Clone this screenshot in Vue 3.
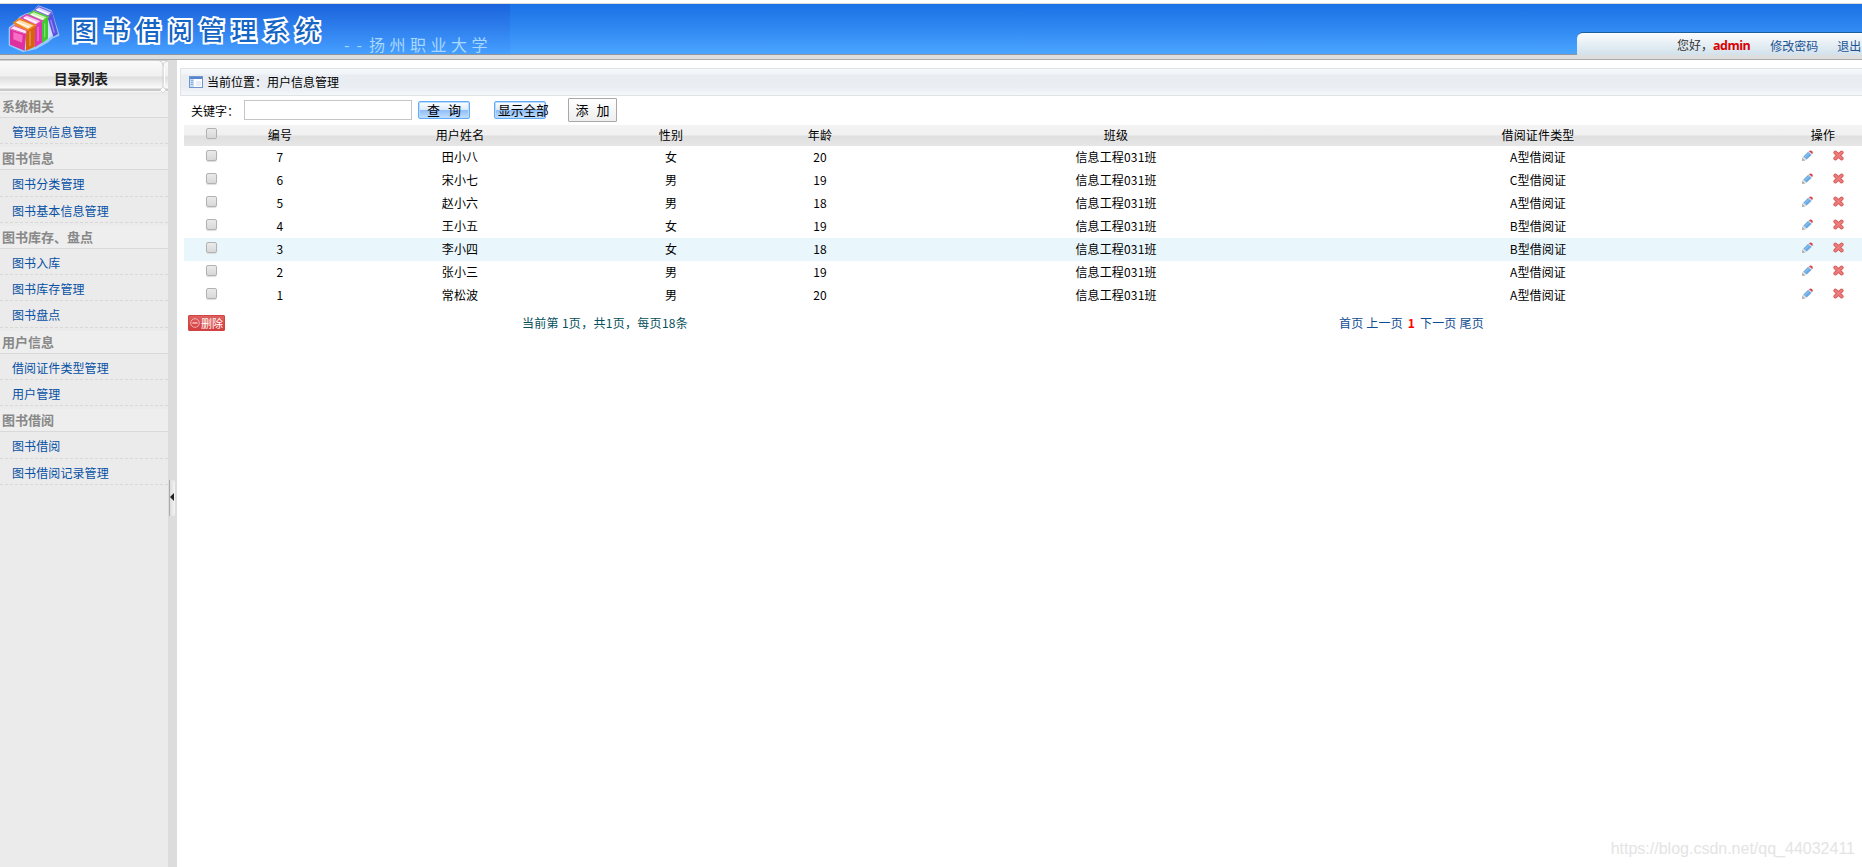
<template>
  <div class="page">
    <header class="header">
      <div class="brand">
        <svg class="logo" viewBox="0 12 180 150">
          <g class="logo-glow">
            <path d="M30 84 46 72 60 54 78 44 98 38 116 20 152 34 174 104 156 112 142 124 106 144 70 152 30 134Z" />
          </g>
          <path d="M140 44 156 36 174 102 160 110Z" fill="#5b50e0" />
          <path d="M104 30 116 20 157 37 144 48Z" fill="#d9d4ff" stroke="#7a68e8" stroke-width="4" />
          <path d="M122 64 144 50 144 116 126 130Z" fill="#3fc72f" />
          <path d="M86 44 100 34 144 51 126 66Z" fill="#c9f5b4" stroke="#58c838" stroke-width="5" />
          <path d="M100 74 126 62 126 128 104 142Z" fill="#e033b4" />
          <path d="M64 54 80 44 126 63 106 76Z" fill="#fbc4ec" stroke="#d946b6" stroke-width="5" />
          <path d="M76 86 106 74 104 140 78 152Z" fill="#d66408" />
          <path d="M42 68 58 57 106 76 84 90Z" fill="#ffe0b0" stroke="#f08015" stroke-width="5" />
          <path d="M44 70 44 84 78 98 80 88Z" fill="#f08a20" />
          <path d="M50 66 88 81M72 53 110 68M92 42 130 57M109 28 146 43" stroke="#fff" stroke-width="4" />
          <path d="M90 94v44M114 80v44M134 70v42M152 60l11 38" stroke="#fff" stroke-width="4" opacity=".35" />
          <path d="M30 88 78 102 74 152 30 134Z" fill="#e02f9f" />
          <path d="M30 86 42 77 80 92 78 102Z" fill="#ffe6f7" stroke="#e55bb4" stroke-width="3" />
          <path d="M40 96 68 105 66 128 40 118Z" fill="#f76cc4" />
        </svg>
        <h1 class="title">图书借阅管理系统</h1>
        <span class="school"><i>--</i>扬州职业大学</span>
      </div>
      <div class="user-bar">
        <span class="hello">您好，<b>admin</b></span>
        <a class="pwd">修改密码</a>
        <a>退出</a>
      </div>
    </header>

    <div class="body">
      <aside class="sidebar">
        <div class="menu-title">
          <span>目录列表</span>
          <svg class="menu-edge" width="10" height="34" viewBox="0 0 10 34" fill="none">
            <path d="M0 .5h1q4 1 4 5v21l-3 3.500 3 3 3-3-3-3.500" stroke="#d0d0d0" />
            <path d="M10 1q-5 1-5 5" stroke="#d0d0d0" />
            <path d="M6.500 8v18" stroke="#fff" />
            <path d="M5 27.500 7.500 30 5 32.500 2.500 30Z" fill="#fff" />
          </svg>
        </div>
        <template v-for="group in menu" :key="group.name">
          <div class="menu-group">{{ group.name }}</div>
          <a v-for="item in group.items" :key="item" class="menu-item">{{ item }}</a>
        </template>
      </aside>

      <div class="splitter">
        <div class="handle"><i></i></div>
      </div>

      <main class="main">
        <div class="location">
          <svg width="14" height="12" viewBox="0 0 14 12">
            <rect x=".5" y=".5" width="13" height="11" fill="#fff" stroke="#6f97cf" />
            <path d="M1 1h12v2H1z" fill="#5585cc" />
            <path d="M1 3h4v8H1z" fill="#c6dcf5" />
            <path d="M2 4.500h2M2 6.500h2M2 8.500h2" stroke="#8aaedb" />
            <path d="M7 5h5v5H7z" fill="#e9eff8" />
          </svg>
          <span>当前位置：用户信息管理</span>
        </div>

        <form class="search" @submit.prevent>
          <label>关键字：</label>
          <input v-model="keyword" type="text" class="keyword" />
          <button class="btn-blue">查&nbsp; 询</button>
          <button class="btn-blue btn-all">显示全部</button>
          <button class="btn-add">添&nbsp; 加</button>
        </form>

        <div class="row head">
          <span><input type="checkbox" v-model="allChecked" class="check" /></span>
          <span v-for="col in columns" :key="col">{{ col }}</span>
        </div>
        <div
          v-for="user in users"
          :key="user.id"
          class="row"
          :class="{ active: user.id === activeId }"
        >
          <span><input type="checkbox" v-model="user.checked" class="check" /></span>
          <span>{{ user.id }}</span>
          <span>{{ user.name }}</span>
          <span>{{ user.sex }}</span>
          <span>{{ user.age }}</span>
          <span>信息工程031班</span>
          <span>{{ user.card }}型借阅证</span>
          <span class="ops">
            <svg width="12" height="12" viewBox="0 0 12 12">
              <path d="M1 11 1.300 7.500 4.300 10.500Z" fill="#aaa" />
              <path d="M1.300 7.500 3 6 6 9 4.300 10.600Z" fill="#ddd" />
              <path d="M2.400 6.500 7.200 1.800 10.500 5 5.700 9.600Z" fill="#6aaae2" />
              <path d="M4 7.200 8.400 3" stroke="#9bcaf0" />
              <path d="M7.200 1.800 8.200 1 11.200 4 10.500 5Z" fill="#d8d8e0" />
              <path d="M8 1.200Q9.500-.2 11 1.100T11.200 4Z" fill="#d8414f" />
            </svg>
            <svg width="11" height="11" viewBox="0 0 11 11">
              <path d="M2.300 2.500 8.700 8.500M8.700 2.500 2.300 8.500" stroke="#d35c5c" stroke-width="3.800" stroke-linecap="round" />
              <path d="M2.300 2.500 8.700 8.500M8.700 2.500 2.300 8.500" stroke="#ee7c7b" stroke-width="2.200" stroke-linecap="round" />
            </svg>
          </span>
        </div>

        <div class="footer">
          <button class="btn-del">
            <svg width="10" height="10" viewBox="0 0 10 10" fill="none" stroke="#f3b0b0">
              <circle cx="5" cy="5" r="4.300" />
              <path d="M2.500 5h5" stroke="#fff" />
            </svg>
            <span>删除</span>
          </button>
          <span class="summary">当前第 1页，共1页，每页18条</span>
          <span class="pager">
            <a>首页</a> <a>上一页</a> <b>1</b> <a>下一页</a> <a>尾页</a>
          </span>
        </div>
      </main>
    </div>
    <div class="watermark">https://blog.csdn.net/qq_44032411</div>
  </div>
</template>

<script setup>
import { ref } from 'vue';

const keyword = ref('');
const allChecked = ref(false);
const activeId = ref(3);

const menu = [
  { name: '系统相关', items: ['管理员信息管理'] },
  { name: '图书信息', items: ['图书分类管理', '图书基本信息管理'] },
  { name: '图书库存、盘点', items: ['图书入库', '图书库存管理', '图书盘点'] },
  { name: '用户信息', items: ['借阅证件类型管理', '用户管理'] },
  { name: '图书借阅', items: ['图书借阅', '图书借阅记录管理'] },
];

const columns = ['编号', '用户姓名', '性别', '年龄', '班级', '借阅证件类型', '操作'];

const users = ref([
  { id: 7, name: '田小八', sex: '女', age: 20, card: 'A', checked: false },
  { id: 6, name: '宋小七', sex: '男', age: 19, card: 'C', checked: false },
  { id: 5, name: '赵小六', sex: '男', age: 18, card: 'A', checked: false },
  { id: 4, name: '王小五', sex: '女', age: 19, card: 'B', checked: false },
  { id: 3, name: '李小四', sex: '女', age: 18, card: 'B', checked: false },
  { id: 2, name: '张小三', sex: '男', age: 19, card: 'A', checked: false },
  { id: 1, name: '常松波', sex: '男', age: 20, card: 'A', checked: false },
]);
</script>

<style>
body {
  margin: 0;
  overflow: hidden;
}
</style>

<style scoped>
.page {
  position: relative;
  display: flex;
  flex-direction: column;
  height: 100vh;
  overflow: hidden;
  background: #fff;
  color: #000;
  font: 12px/18px "Noto Sans CJK SC", sans-serif;
}

.page * {
  box-sizing: border-box;
}

button,
input {
  margin: 0;
  padding: 0;
  font: inherit;
}

/* header */
.header {
  display: flex;
  justify-content: space-between;
  flex: none;
  height: 57px;
  margin-top: 3px;
  border-top: 1px solid #d9d9d9;
  border-bottom: 1px solid #a9a9a9;
  background: linear-gradient(#1a72e6, #2e86f0 45%, #4aa5ff) 0 0 / 100% 50px no-repeat,
    linear-gradient(#8f979e 0 1px, #dedede 1px) 0 50px / 100% 6px no-repeat;
}

.brand {
  display: flex;
  align-items: flex-start;
  width: 510px;
  height: 50px;
  background: linear-gradient(#1a63dc, #2d7dec 45%, #469fff);
}

.logo {
  width: 60px;
  height: 50px;
}

.logo-glow {
  fill: #fff;
  stroke: #b9dcff;
  stroke-width: 8px;
  stroke-linejoin: round;
  opacity: 0.75;
}

.title {
  width: 272px;
  margin: 8px 0 0 12px;
  color: #1565c4;
  font-size: 25px;
  font-weight: 500;
  line-height: 34px;
  letter-spacing: 6.900px;
  white-space: nowrap;
  -webkit-text-stroke: 4px #fff;
  paint-order: stroke fill;
}

.school {
  display: block;
  margin-top: 29px;
  color: #a9d8ff;
  font-size: 16px;
  line-height: 22px;
  letter-spacing: 4.500px;
  white-space: nowrap;
}

.school i {
  font-style: normal;
  letter-spacing: 7px;
}

.user-bar {
  display: flex;
  align-items: center;
  width: 285px;
  height: 23px;
  margin-top: 28px;
  padding: 3px 0 0 100px;
  border-top: 1px solid #1d5f9d;
  border-top-left-radius: 6px;
  background: linear-gradient(#fbfdfe, #d2e1eb);
  color: #333;
  white-space: nowrap;
}

.hello b {
  color: #d90000;
  font-family: "Open Sans", sans-serif;
  font-size: 12.500px;
  letter-spacing: -0.500px;
}

.user-bar a {
  color: #1c5393;
}

.user-bar .pwd {
  margin: 0 19px 0 20px;
}

/* sidebar */
.body {
  display: flex;
  flex: 1;
  min-height: 0;
}

.sidebar {
  flex: none;
  width: 168px;
  background: #ebebeb;
}

.menu-title {
  display: flex;
  justify-content: space-between;
  height: 31.700px;
  background: linear-gradient(#d0d0d0 0 1px, #fafafa 1px, #f0f0f0 16px, #dedede 17px, #fafafa 28px, #c9c9c9 29px 31px, #f6f6f6 31px);
  color: #222;
  font-size: 13.500px;
  font-weight: bold;
  line-height: 37px;
}

.menu-title span {
  padding-left: 54px;
}

.menu-edge {
  flex: none;
}

.menu-group,
.menu-item {
  display: block;
  height: 26.210px;
  white-space: nowrap;
}

.menu-group {
  padding: 3px 0 0 2px;
  border-bottom: 1px solid #d9d9d9;
  background: linear-gradient(#ebebeb 3px, #eeeeee 3px);
  color: #888;
  font-size: 13px;
  font-weight: bold;
  line-height: 22px;
}

.menu-item {
  padding-left: 12px;
  border-bottom: 1px dashed #d8d8d8;
  color: #0750a4;
  letter-spacing: 0.100px;
  line-height: 28px;
}

.splitter {
  display: flex;
  align-items: flex-start;
  flex: none;
  width: 9px;
  padding-top: 420px;
  background: #dcdcdc;
}

.handle {
  display: flex;
  align-items: center;
  width: 6px;
  height: 36px;
  margin-left: 1px;
  padding-bottom: 3px;
  border-left: 1px solid #aaa;
  border-radius: 0 3px 3px 0;
  background: linear-gradient(90deg, #ddd, #f4f4f4);
}

.handle i {
  border: 4px solid transparent;
  border-left: 0;
  border-right-color: #222;
}

/* content */
.main {
  flex: 1;
  min-width: 0;
  overflow: hidden;
  padding: 8px 0 0 3px;
}

.location {
  display: flex;
  align-items: center;
  gap: 4px;
  height: 28px;
  padding: 0 0 1px 8px;
  border: solid #e0e3e5;
  border-width: 1px 0 1px 1px;
  background: linear-gradient(#f6f9fb, #f1f4f8 5px, #e9edf2 6px, #eaeef3 18px, #f5f6f9);
}

.search {
  display: flex;
  align-items: center;
  height: 29px;
  padding: 0 0 1px 11px;
}

.search label {
  width: 53px;
  padding-top: 2px;
}

.keyword {
  width: 168px;
  height: 20px;
  border: 1px solid #c6c6c6;
  outline: 0;
}

.btn-blue {
  width: 52px;
  height: 18px;
  margin-left: 6px;
  border: 1px solid #62abf8;
  border-radius: 2px;
  box-shadow: inset 0 0 0 1px #b7dcff;
  background: linear-gradient(#fff, #dcebfd 48%, #8fbcf8 50%, #c2dffe);
  color: #000;
  font-size: 13px;
  line-height: 14px;
  word-spacing: 1px;
  white-space: nowrap;
}

.btn-all {
  margin-left: 24px;
  padding-left: 3px;
  font-size: 12.700px;
  text-align: left;
}

.btn-add {
  width: 49px;
  height: 24px;
  margin-left: 22px;
  border: 1px solid #a8a8a8;
  border-radius: 1px;
  background: linear-gradient(#fff, #eee);
  color: #000;
  font-size: 13px;
  word-spacing: 1px;
}

.row {
  display: grid;
  /* the last column runs past the right edge of the window */
  grid-template-columns: 54px 84px 276px 146px 152px 440px 404px 166px;
  width: 1722px;
  height: 23px;
  margin-left: 4px;
  letter-spacing: 0.150px;
  line-height: 21px;
  text-align: center;
}

.head {
  height: 21px;
  background: linear-gradient(#f4f4f4, #f0f0f0 10px, #e0e0e0 11px, #e6e6e6);
  line-height: 19px;
}

.active {
  background: #e9f6fb;
}

.check {
  display: block;
  width: 11px;
  height: 11px;
  margin: 4px auto 0 22px;
  appearance: none;
  border: 1px solid #b2b2b2;
  border-radius: 2px;
  box-shadow: 0 1px 1px #ddd;
  background: linear-gradient(#eaeaea, #d8d8d8);
}

.head .check {
  margin-top: 3px;
}

.ops {
  display: flex;
  justify-content: center;
  gap: 20px;
  padding: 4px 2px 0 0;
}

.footer {
  display: flex;
  align-items: center;
  height: 31px;
  padding-left: 8px;
  white-space: nowrap;
}

.btn-del {
  display: flex;
  align-items: center;
  gap: 1px;
  width: 37px;
  height: 16px;
  padding-left: 1px;
  border: 1px solid #cf4545;
  border-radius: 1px;
  background: linear-gradient(#e06060, #d43d3d);
  color: #fff;
  font-size: 11px;
  line-height: 14px;
}

.summary {
  width: 817px;
  margin-left: 297px;
  color: #06515b;
  letter-spacing: 0.300px;
}

.pager,
.pager a {
  color: #0f4d93;
  letter-spacing: 0.200px;
}

.pager b {
  padding: 0 2px;
  color: #f00;
}

.watermark {
  position: absolute;
  right: 7px;
  bottom: 8px;
  color: #e4e4e4;
  font: 16px/20px "Liberation Sans", Arial, sans-serif;
}
</style>
